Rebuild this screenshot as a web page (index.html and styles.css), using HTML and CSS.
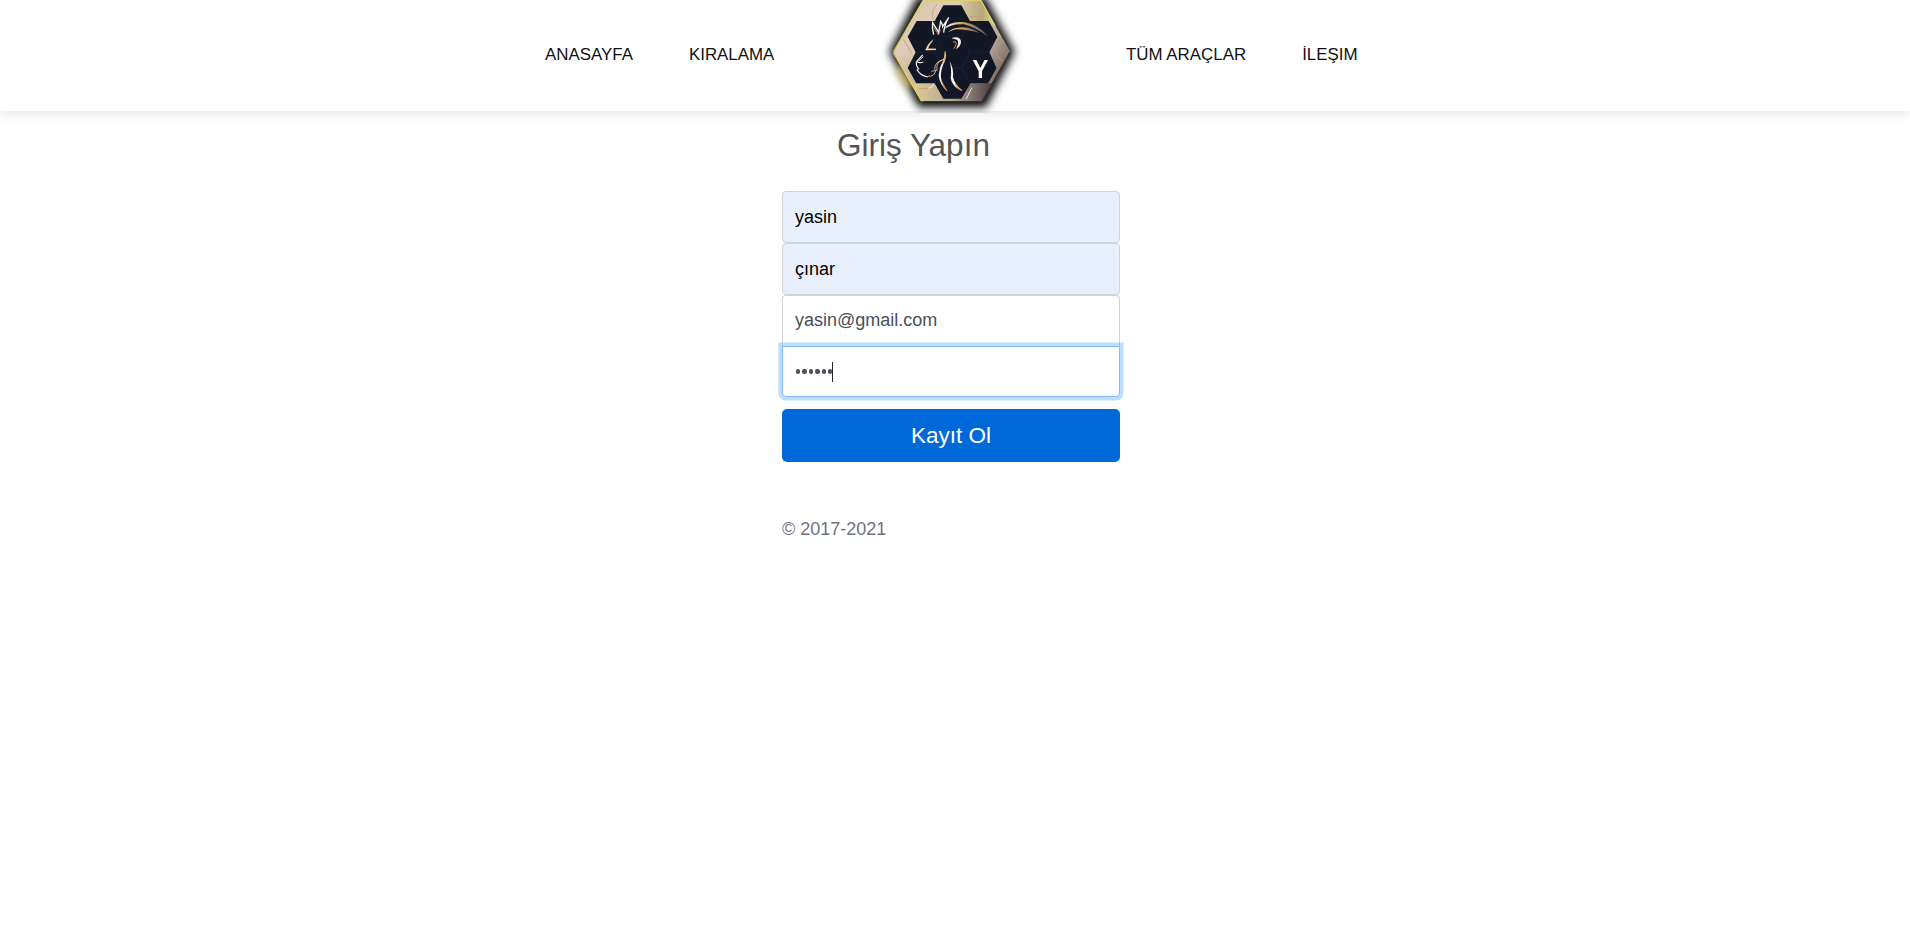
FILE: index.html
```html
<!DOCTYPE html>
<html lang="tr">
<head>
<meta charset="utf-8">
<title>Giriş Yapın</title>
<link rel="stylesheet" href="styles.css">
</head>
<body>
<header class="navbar">
  <nav class="links links-left"><a class="link">ANASAYFA</a><a class="link">KIRALAMA</a></nav>
  <svg class="logo" viewBox="0 0 480 339" aria-label="Logo">
    <defs>
      <linearGradient id="gold" x1="0" y1="0" x2="1" y2="1">
        <stop offset="0" stop-color="#d9c5a4"/><stop offset=".28" stop-color="#dfcbb9"/><stop offset=".5" stop-color="#c9b59a"/><stop offset=".72" stop-color="#b5a598"/><stop offset="1" stop-color="#4b4344"/>
      </linearGradient>
      <linearGradient id="top" x1="0" y1="0" x2="1" y2="0">
        <stop offset="0" stop-color="#d6c3a0"/><stop offset=".6" stop-color="#b9a878"/><stop offset="1" stop-color="#e3dc7c"/>
      </linearGradient>
      <linearGradient id="right" x1="0" y1="0" x2="1" y2="1">
        <stop offset="0" stop-color="#dccabb"/><stop offset=".4" stop-color="#a8978c"/><stop offset="1" stop-color="#3f373a"/>
      </linearGradient>
      <linearGradient id="base" x1="0" y1="0" x2="1" y2="0">
        <stop offset="0" stop-color="#dccb90"/><stop offset=".5" stop-color="#b8a797"/><stop offset="1" stop-color="#4a4143"/>
      </linearGradient>
      <linearGradient id="hair" x1="0" y1="0" x2="1" y2="0">
        <stop offset="0" stop-color="#fff"/><stop offset=".4" stop-color="#d9a65a"/><stop offset="1" stop-color="#55576a"/>
      </linearGradient>
      <filter id="blur" x="-20%" y="-20%" width="140%" height="140%" color-interpolation-filters="sRGB"><feGaussianBlur stdDeviation="12"/></filter>
      <filter id="soft" x="-100%" y="-50%" width="300%" height="200%" color-interpolation-filters="sRGB"><feGaussianBlur stdDeviation="11"/></filter>
      <filter id="tiny" color-interpolation-filters="sRGB"><feGaussianBlur stdDeviation="1"/></filter>
    </defs>
    <path d="M142-10H346L434 155 348 322H146L58 155Z" fill="#050505" filter="url(#blur)"/>
    <path d="M82 205L118 262" stroke="#e6cf78" stroke-width="20" opacity=".85" filter="url(#soft)"/>
    <g filter="url(#tiny)">
      <path d="M159 1H334L420 155 336 306H159L71 155Z" fill="url(#gold)"/>
      <path d="M276 2H334L376 78 356 63H300L276 18Z" fill="url(#top)"/>
      <path d="M380 110L395 112 420 155 336 306 302 250H352L382 204 358 157Z" fill="url(#right)"/>
      <path d="M160 250H194L220 296H274L302 250H366L336 306H159L128 253Z" fill="url(#base)"/>
      <path d="M159 2H334L376 78" fill="none" stroke="#e3d86a" stroke-width="3"/>
      <path d="M159 2L71 155" stroke="#d8c96c" stroke-width="4"/>
      <path d="M71 158L155 303" stroke="#e3d564" stroke-width="5"/>
      <path d="M159 305H336L420 156" fill="none" stroke="#39302e" stroke-width="4"/>
      <path d="M101 119L124 157M202 12Q180 35 190 58M300 50L348 47M373 150L394 184M145 266L175 265" fill="none" stroke="#c99a7c" stroke-width="2.5"/>
      <path d="M288 298L306 263M175 265Q188 263 192 250" fill="none" stroke="#f4e6d5" stroke-width="3"/>
      <path d="M220 16H274L300 63H356L382 110 358 157 380 204 354 250H302L274 296H220L194 250H139L113 204 137 157 113 110 140 63H194Z" fill="#111725"/>
      <path d="M194 63L220 110H274L300 63M220 110L194 157 220 204H274L300 157 274 110M137 157H194M300 157H358M220 204L194 250M274 204L302 250M300 157L276 204" fill="none" stroke="#1a243a" stroke-width="2"/>
      <path d="M191 104Q185 84 188 68L206 97 212 64Q218 72 218 80L236 53Q223 75 221 98" fill="none" stroke="#f4f1ec" stroke-width="4"/>
      <path d="M191 80L205 105 211 90" fill="none" stroke="#d6a159" stroke-width="2.5"/>
      <path d="M220 90Q236 62 285 67 325 74 355 110 313 80 282 73 241 71 220 90Z" fill="url(#hair)"/>
      <path d="M230 100Q252 76 294 83 318 90 330 99 284 87 258 88 239 92 230 100Z" fill="url(#hair)"/>
      <path d="M247 113Q273 108 273 126 272 140 257 148 266 134 264 124 261 116 247 116Z" fill="#f2ede6"/>
      <path d="M249 126Q259 123 259 130 258 138 251 146" fill="none" stroke="#c89650" stroke-width="3"/>
      <path d="M191 117Q173 130 166 151L198 150 198 146 174 146Q180 130 191 117Z" fill="#f4efe8"/>
      <path d="M188 123Q176 136 172 146L195 147" fill="none" stroke="#d69a49" stroke-width="2"/>
      <path d="M158 165Q150 174 139 186 138 200 147 208M142 186Q150 190 160 186M141 208Q148 226 174 231" fill="none" stroke="#f7f3ed" stroke-width="3.5"/>
      <path d="M160 170L146 184M174 229Q194 230 197 211L194 208Q194 184 222 178" fill="none" stroke="#e7ad65" stroke-width="3"/>
      <path d="M184 214L201 211Q197 189 216 180" fill="none" stroke="#f3eee7" stroke-width="2"/>
      <path d="M225 151Q232 167 223 187 211 210 213 233 218 259 232 275 207 251 206 226 207 205 218 184 225 168 225 151Z" fill="#f7f3ec"/>
      <path d="M226 156Q227 175 217 192M214 243L231 273" fill="none" stroke="#d8923d" stroke-width="3"/>
      <path d="M239 183Q252 207 249 232 254 253 278 273 246 262 242 235 246 208 239 183Z" fill="#f8f3ec"/>
      <path d="M256 252Q262 264 275 271" fill="none" stroke="#df9c3d" stroke-width="4"/>
      <text class="logo-letter" x="331" y="235" text-anchor="middle">Y</text>
    </g>
  </svg>
  <nav class="links links-right"><a class="link">TÜM ARAÇLAR</a><a class="link">İLEŞIM</a></nav>
</header>
<main class="signin">
  <h1 class="title">Giriş Yapın</h1>
  <div class="field filled">yasin</div>
  <div class="field filled">çınar</div>
  <div class="field email">yasin@gmail.com</div>
  <div class="field password"><span class="dots"><i class="dot"></i><i class="dot"></i><i class="dot"></i><i class="dot"></i><i class="dot"></i><i class="dot"></i></span><span class="caret"></span></div>
  <button class="submit">Kayıt Ol</button>
  <p class="copyright">© 2017-2021</p>
</main>
</body>
</html>
```
FILE: styles.css
```css
* { box-sizing: border-box; }
body {
  margin: 0;
  background: #fff;
  color: #212529;
  font: 18px/27px "Liberation Sans", Arial, sans-serif;
}
.navbar {
  display: flex;
  height: 111px;
  padding-left: 545px;
  box-shadow: 0 0 14px rgba(0, 0, 0, .14);
}
.links {
  display: flex;
  gap: 56px;
  padding-top: 41px;
}
.links-left { width: 325px; }
.links-right { padding-left: 96px; }
.link {
  color: #111;
  font-size: 16.9px;
  white-space: nowrap;
}
.logo { display: block; width: 160px; height: 113px; flex: none; }
.logo-letter {
  font: 600 76px "Noto Sans", sans-serif;
  fill: #fffaf2;
}
.signin {
  width: 338px;
  margin-left: 782px;
  padding-top: 15px;
}
.title {
  margin: 0 0 27px 55px;
  color: #555;
  font-size: 31.5px;
  font-weight: 400;
  line-height: 38px;
}
.field {
  display: flex;
  align-items: center;
  height: 52px;
  padding: 0 12px;
  border: 1px solid #ced4da;
  border-radius: 4px;
  color: #495057;
}
.filled { background: #e8f0fe; color: #000; }
.email {
  height: 51px;
  padding-bottom: 2px;
  border-bottom: 0;
  border-radius: 4px 4px 0 0;
}
.password {
  position: relative;
  height: 51px;
  border-color: #80bdff;
  border-radius: 0 0 4px 4px;
  background: #fff;
  box-shadow: 0 0 0 3.6px rgba(0, 123, 255, .25);
}
.dots { display: flex; gap: 2px; padding-left: 1px; }
.dot { width: 4.4px; height: 4.4px; border-radius: 50%; background: #495057; }
.caret { width: 1px; height: 20px; background: #212529; }
.submit {
  display: block;
  width: 100%;
  height: 53px;
  margin: 12px 0 0;
  padding: 0;
  border: 0;
  border-radius: 5px;
  background: #0069d9;
  color: #fff;
  font: 22.5px/34px "Liberation Sans", Arial, sans-serif;
}
.copyright { margin: 54px 0 0; color: #6c757d; }
```
